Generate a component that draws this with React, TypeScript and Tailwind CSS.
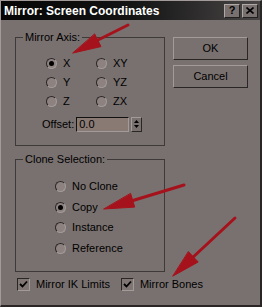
import type { ReactNode } from 'react'

const font = { fontFamily: '"Liberation Sans", Arial, sans-serif' }

function Radio({ label, checked = false }: { label: string; checked?: boolean }) {
  return (
    <div className="flex h-[19px] items-center gap-[6px] whitespace-nowrap">
      <span className="flex h-[11px] w-[11px] shrink-0 items-center justify-center rounded-full border border-t-[#2a2626] border-l-[#2a2626] border-r-[#a39b99] border-b-[#a39b99] bg-[#8d8280]">
        {checked && <span className="h-[5px] w-[5px] rounded-full bg-black" />}
      </span>
      <span className="text-[11px] leading-none text-black">{label}</span>
    </div>
  )
}

function Check({ label }: { label: string }) {
  return (
    <div className="flex shrink-0 items-center gap-[6px] whitespace-nowrap">
      <span className="flex h-[13px] w-[13px] shrink-0 items-center justify-center border border-t-[#2a2626] border-l-[#2a2626] border-r-[#a39b99] border-b-[#a39b99] bg-[#7f7573]">
        <svg width="9" height="9" viewBox="0 0 9 9">
          <path d="M1 4 L3.5 6.5 L8 1.5" fill="none" stroke="#000" strokeWidth="1.8" />
        </svg>
      </span>
      <span className="text-[11px] leading-none text-black">{label}</span>
    </div>
  )
}

// group box: border with its caption sitting on the top line
function Group({ title, className, children }: { title: string; className: string; children: ReactNode }) {
  return (
    <div className={`w-[150px] border border-[#3e3a3a] ${className}`}>
      <div className="-mt-[7px] ml-[7px] w-fit bg-[#79716f] px-[2px] text-[11px] leading-[13px] text-black">{title}</div>
      {children}
    </div>
  )
}

function Button({ label }: { label: string }) {
  return (
    <div className="flex h-[23px] w-[75px] items-center justify-center border border-t-[#a39b99] border-l-[#a39b99] border-r-[#2a2626] border-b-[#2a2626] text-[11px] text-black">
      {label}
    </div>
  )
}

export default function App() {
  return (
    <div
      className="relative h-[307px] w-[262px] overflow-hidden border-l border-t border-r-2 border-b-2 border-l-[#a39b99] border-t-[#a39b99] border-r-[#2a2626] border-b-[#2a2626] bg-[#79716f]"
      style={font}
    >
      <div className="flex h-[19px] items-center justify-between bg-gradient-to-r from-[#060606] via-[#141414] to-[#4a4646] pl-[3px] pr-[2px]">
        <span className="text-[12px] font-bold text-white">Mirror: Screen Coordinates</span>
        <div className="flex gap-[2px]">
          <span className="flex h-[14px] w-[16px] items-center justify-center border border-t-[#b0a8a6] border-l-[#b0a8a6] border-r-[#202020] border-b-[#202020] bg-[#79716f] text-[11px] font-bold leading-none text-black">?</span>
          <span className="flex h-[14px] w-[16px] items-center justify-center border border-t-[#b0a8a6] border-l-[#b0a8a6] border-r-[#202020] border-b-[#202020] bg-[#79716f]">
            <svg width="8" height="7" viewBox="0 0 8 7">
              <path d="M0.5 0.5 L7.5 6.5 M7.5 0.5 L0.5 6.5" stroke="#000" strokeWidth="1.6" />
            </svg>
          </span>
        </div>
      </div>

      <div className="flex gap-[8px] pl-[14px] pt-[17px]">
        <div className="flex w-[150px] shrink-0 flex-col">
          <Group title="Mirror Axis:" className="h-[109px]">
            <div className="ml-[30px] mt-[10px] grid w-[100px] grid-cols-2">
              <Radio label="X" checked />
              <Radio label="XY" />
              <Radio label="Y" />
              <Radio label="YZ" />
              <Radio label="Z" />
              <Radio label="ZX" />
            </div>
            <div className="ml-[26px] mt-[5px] flex items-center gap-[2px]">
              <span className="text-[11px] text-black">Offset:</span>
              <span className="flex h-[15px] w-[53px] items-center border border-t-[#111] border-l-[#111] border-r-[#a39b99] border-b-[#a39b99] bg-[#8a7a74] pl-[2px] text-[11px] text-black">0.0</span>
              <span className="flex h-[15px] w-[11px] flex-col items-center justify-center gap-[2px] border border-t-[#a39b99] border-l-[#a39b99] border-r-[#2a2626] border-b-[#2a2626]">
                <svg width="5" height="3" viewBox="0 0 5 3"><path d="M0 3 L2.5 0 L5 3Z" fill="#000" /></svg>
                <svg width="5" height="3" viewBox="0 0 5 3"><path d="M0 0 L2.5 3 L5 0Z" fill="#000" /></svg>
              </span>
            </div>
          </Group>

          <Group title="Clone Selection:" className="mt-[13px] h-[113px]">
            <div className="ml-[39px] mt-[11px] flex flex-col gap-[1.5px]">
              <Radio label="No Clone" />
              <Radio label="Copy" checked />
              <Radio label="Instance" />
              <Radio label="Reference" />
            </div>
          </Group>

          <div className="mt-[6px] flex gap-[11px] pl-[2px]">
            <Check label="Mirror IK Limits" />
            <Check label="Mirror Bones" />
          </div>
        </div>

        <div className="flex flex-col gap-[5px]">
          <Button label="OK" />
          <Button label="Cancel" />
        </div>
      </div>

      <svg className="pointer-events-none absolute left-[-1px] top-[-1px]" width="262" height="307" viewBox="0 0 262 307">
        <g fill="#a5121b" stroke="#a5121b" strokeLinecap="round">
          <line x1="128" y1="25" x2="92" y2="43" strokeWidth="3" />
          <polygon points="73,53 101,46.6 94.8,34.2" strokeWidth="1" />
          <line x1="184" y1="185" x2="128" y2="202" strokeWidth="3" />
          <polygon points="104,209 134.7,207.1 130.7,193.7" strokeWidth="1" />
          <line x1="235" y1="218" x2="190" y2="260" strokeWidth="3" />
          <polygon points="173,276 198.2,262 188.6,251.8" strokeWidth="1" />
        </g>
      </svg>
    </div>
  )
}
